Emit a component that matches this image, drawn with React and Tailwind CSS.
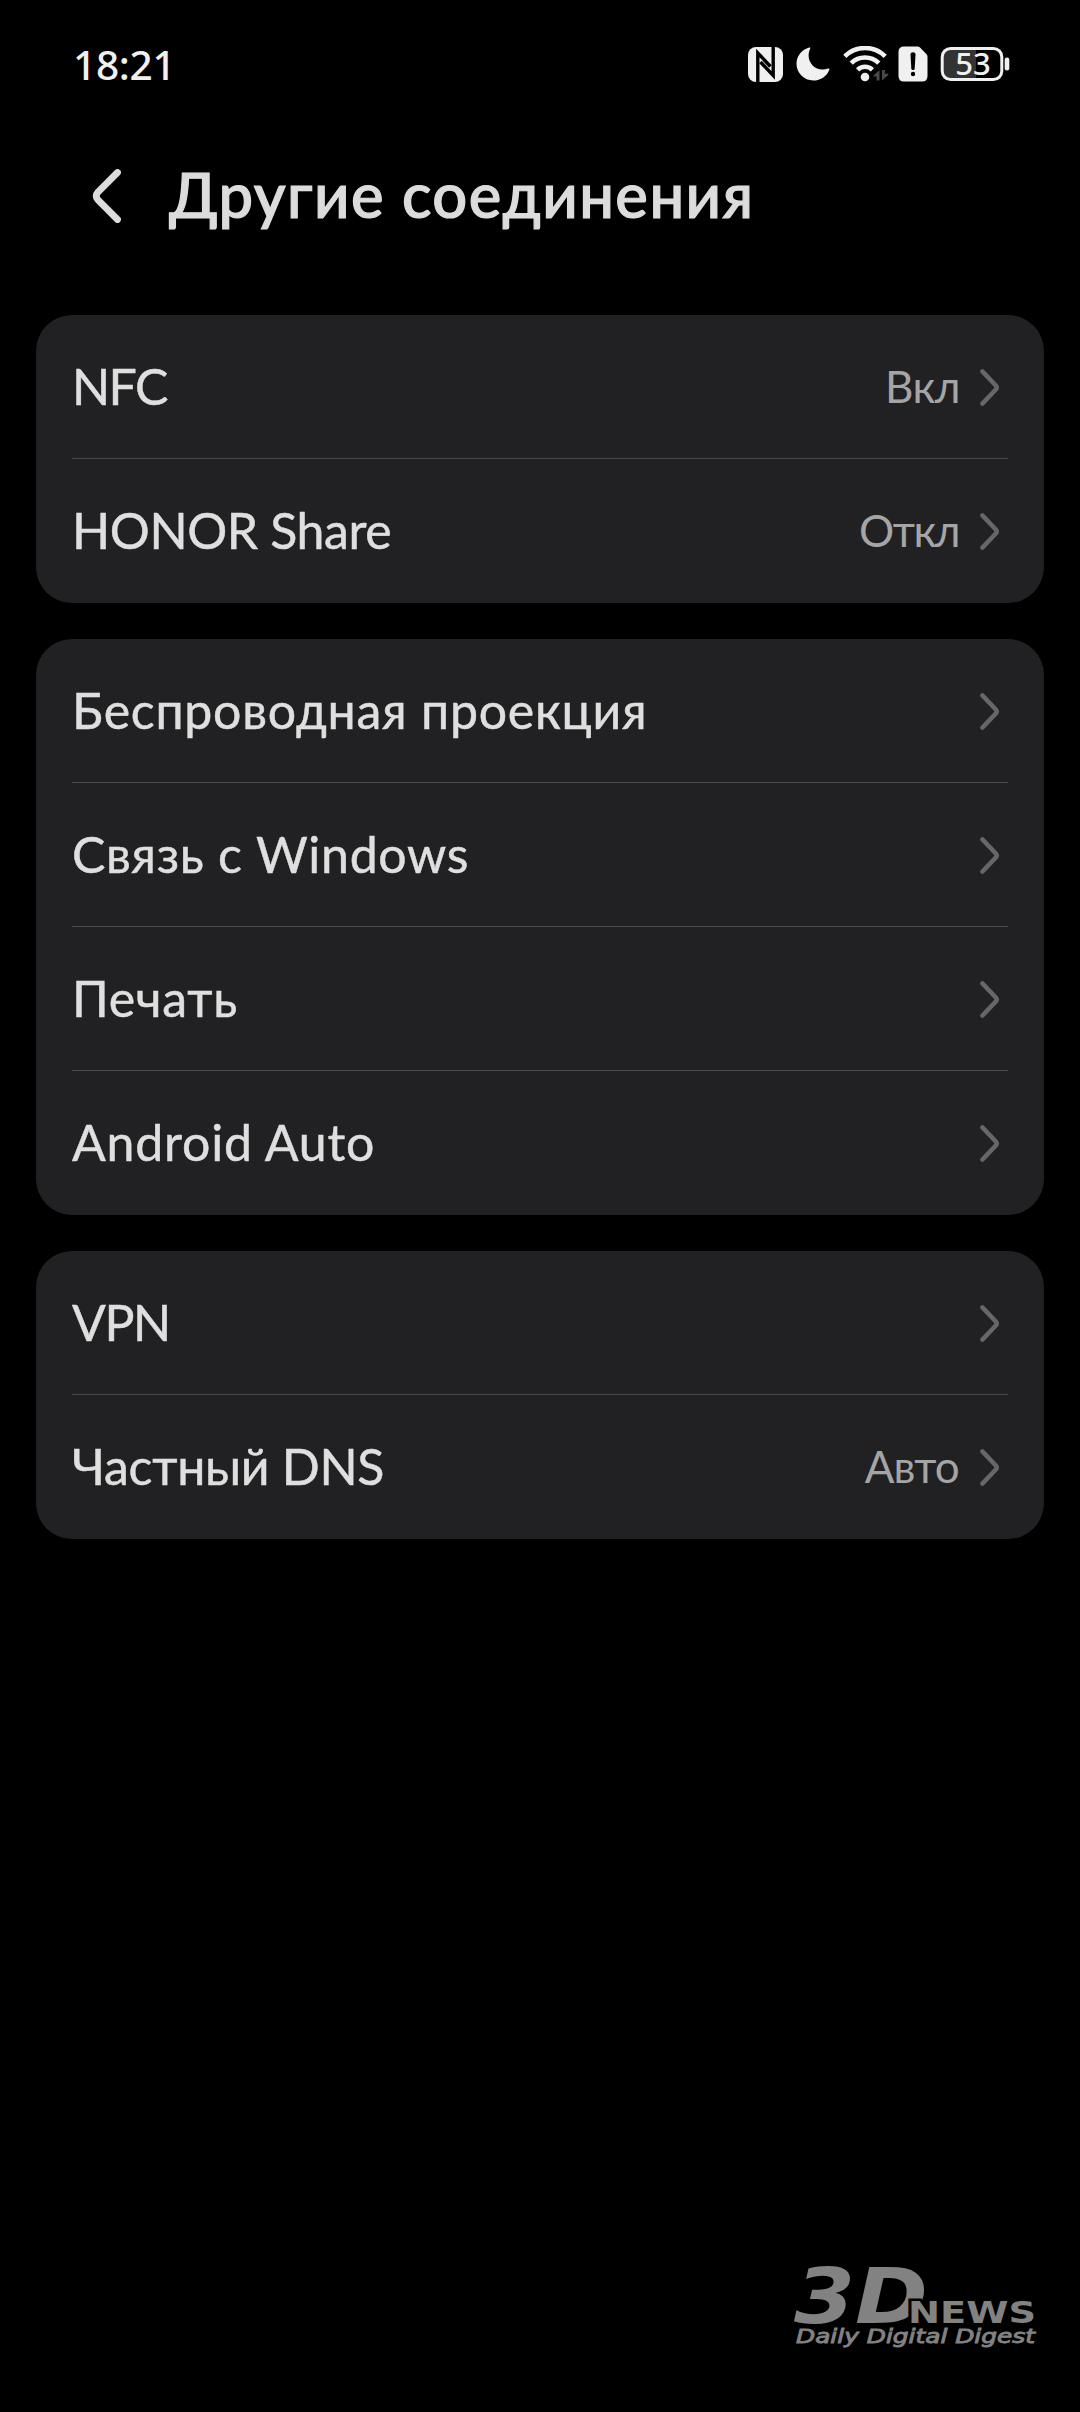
import React from "react";

const groups = [
  [
    { label: "NFC", tracking: "tracking-[-1.6px]", value: "Вкл", valueTracking: "tracking-[-0.5px] mr-px" },
    { label: "HONOR Share", tracking: "tracking-[-0.4px]", value: "Откл", valueTracking: "tracking-[-1.5px] mr-[2px]" },
  ],
  [
    { label: "Беспроводная проекция", tracking: "tracking-[0.75px]" },
    { label: "Связь с Windows", tracking: "tracking-[0.7px]" },
    { label: "Печать", tracking: "tracking-[0.7px]" },
    { label: "Android Auto", tracking: "tracking-[0.8px]" },
  ],
  [
    { label: "VPN", tracking: "tracking-[-1.4px]" },
    { label: "Частный DNS", tracking: "tracking-[-0.3px]", value: "Авто", valueTracking: "tracking-[-0.8px] mr-[2px]" },
  ],
];

function NfcIcon() {
  return (
    <svg width="35" height="35" viewBox="0 0 35 35" fill="none">
      <rect width="35" height="35" rx="8" fill="#f0f0f0" />
      <path d="M9.800 35V6L22.500 19.500" stroke="#000" strokeWidth="3.400" />
      <path d="M25.200 0V28.500L12.500 15" stroke="#000" strokeWidth="3.400" />
    </svg>
  );
}

function MoonIcon() {
  return (
    <svg className="ml-[13px]" width="34" height="34" viewBox="0 0 34 34">
      <path d="M13.3 .6C5.8 2.6 .5 9.200 .5 16.800C.5 26 8 33.500 17.200 33.500C24.800 33.500 31.300 28.800 33.400 22.400C33.600 21.600 32.900 21.200 32.200 21.500C30.500 22.200 28.600 22.500 26.600 22.500C18.800 22.500 12.600 16.300 12.600 8.500C12.600 6.100 13.200 3.900 14.200 1.800C14.600 1 14.200 .4 13.300 .6Z" fill="#f0f0f0" />
    </svg>
  );
}

function WifiIcon() {
  return (
    <svg className="ml-[13px]" width="46" height="36" viewBox="0 0 46 36" fill="none">
      <g stroke="#f0f0f0" strokeWidth="4.600">
        <path d="M1.800 10.400A28.500 28.500 0 0 1 42.200 10.400" />
        <path d="M8.200 17.200A19.500 19.500 0 0 1 35.800 17.200" />
        <path d="M14.600 23.800A10.500 10.500 0 0 1 29.400 23.800" />
      </g>
      <circle cx="22" cy="31" r="4.300" fill="#f0f0f0" />
      <g fill="#484848">
        <path d="M36.500 24V34.500H33.500V30.500H30.500V29.500Z" />
        <path d="M39 24H41.800V27.800H45.300V29L39 34.500Z" />
      </g>
    </svg>
  );
}

function SimAlertIcon() {
  return (
    <svg className="ml-[9px]" width="30" height="36" viewBox="0 0 30 36">
      <path d="M6 .5H19.500Q21 .5 22 1.500L28.300 8Q29.500 9.200 29.500 11V30Q29.500 35.500 24 35.500H6Q.5 35.500 .5 30V6Q.5 .5 6 .5Z" fill="#f0f0f0" />
      <path d="M12.500 8.300Q12.500 6.200 15 6.200T17.500 8.300L16.700 22.500Q16.600 24 15 24T13.300 22.500Z" fill="#000" />
      <circle cx="15" cy="28" r="2.200" fill="#000" />
    </svg>
  );
}

function BatteryIcon() {
  return (
    <svg className="ml-[12px]" width="70" height="36" viewBox="0 0 70 36">
      <path d="M10 3H36V33H10Q3 33 3 26V10Q3 3 10 3Z" fill="#333" />
      <rect x="2.200" y="2.400" width="59.600" height="31.200" rx="8.500" fill="none" stroke="#f0f0f0" strokeWidth="3" />
      <rect x="64.700" y="11.500" width="4.600" height="13" rx="2.200" fill="#f0f0f0" />
      <text x="33" y="29" textAnchor="middle" className="fill-[#f0f0f0] font-['Noto_Sans',sans-serif] text-[31px] font-medium">53</text>
    </svg>
  );
}

function StatusBar() {
  return (
    <div className="flex h-32 items-center justify-between pl-[73px] pr-[70px]">
      <span className="mt-px font-['Noto_Sans',sans-serif] text-[40.6px] leading-[55px] font-medium tracking-[-0.3px] text-[#f0f0f0]">18:21</span>
      <div className="flex items-center">
        <NfcIcon />
        <MoonIcon />
        <WifiIcon />
        <SimAlertIcon />
        <BatteryIcon />
      </div>
    </div>
  );
}

function Header() {
  return (
    <header className="flex h-[187px] items-start pl-[92px] text-[#dcdcdc]">
      <svg className="mt-[41px] shrink-0" width="29" height="54" viewBox="0 0 29 54" fill="none">
        <path d="M25.500 3.500L6 23Q2.500 27 6 31L25.500 50.500" stroke="currentColor" strokeWidth="6.800" strokeLinecap="round" />
      </svg>
      <h1 className="mt-[29px] ml-12 text-[61.5px] leading-[74px] font-medium tracking-[1.45px] whitespace-nowrap [-webkit-text-stroke:1.2px_#dcdcdc]">Другие соединения</h1>
    </header>
  );
}

function Row({ label, tracking, value, valueTracking, last }) {
  return (
    <div className={`flex h-36 items-center border-b pr-2 ${last ? "border-transparent" : "border-[#4b4b4d]"}`}>
      <span className={`mb-px text-[50px] leading-[60px] whitespace-nowrap text-[#dfdfdf] [-webkit-text-stroke:0.5px_#dfdfdf] ${tracking}`}>{label}</span>
      <div className="ml-auto flex items-center gap-[19px]">
        {value && <span className={`mb-px text-[44px] leading-[52px] text-[#a5a5a6] ${valueTracking}`}>{value}</span>}
        <svg className="mt-px" width="20" height="37" viewBox="0 0 20 37" fill="none">
          <path d="M2.500 2.500L15.800 16.500Q17.600 18.500 15.800 20.500L2.500 34.500" stroke="#67676a" strokeWidth="4.600" strokeLinecap="round" />
        </svg>
      </div>
    </div>
  );
}

function Watermark() {
  return (
    <svg className="mt-auto mr-[30px] mb-[52px] self-end" width="270" height="110" viewBox="0 0 270 110">
      <g className="fill-[#828282] font-['DejaVu_Sans',sans-serif]">
        <text x="14" y="73" textLength="134" lengthAdjust="spacingAndGlyphs" className="text-[76px] font-bold italic">3D</text>
        <text x="128" y="73" textLength="128" lengthAdjust="spacingAndGlyphs" className="stroke-black stroke-[5px] text-[30px] font-bold [paint-order:stroke]">NEWS</text>
        <text x="16" y="92.500" textLength="239" lengthAdjust="spacingAndGlyphs" className="stroke-[#828282] stroke-[0.9px] text-[19px] italic">Daily Digital Digest</text>
      </g>
    </svg>
  );
}

export default function App() {
  return (
    <div className="flex h-[2412px] w-[1080px] flex-col bg-black font-['Lato','Noto_Sans',sans-serif]">
      <StatusBar />
      <Header />
      <main className="flex flex-col gap-9 px-9">
        {groups.map((rows) => (
          <section key={rows[0].label} className="rounded-[36px] bg-[#212123] px-9">
            {rows.map((row, i) => (
              <Row key={row.label} {...row} last={i === rows.length - 1} />
            ))}
          </section>
        ))}
      </main>
      <Watermark />
    </div>
  );
}
